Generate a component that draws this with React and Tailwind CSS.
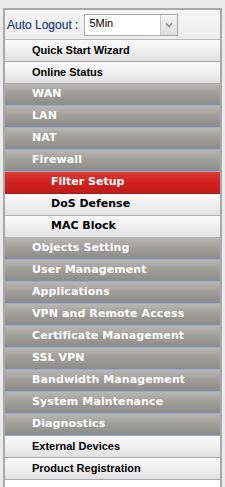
import React from "react";

const items = [
  { t: "Quick Start Wizard", k: "light" },
  { t: "Online Status", k: "light" },
  { t: "WAN", k: "gray" },
  { t: "LAN", k: "gray" },
  { t: "NAT", k: "gray" },
  { t: "Firewall", k: "gray" },
  { t: "Filter Setup", k: "red" },
  { t: "DoS Defense", k: "sub" },
  { t: "MAC Block", k: "sub" },
  { t: "Objects Setting", k: "gray" },
  { t: "User Management", k: "gray" },
  { t: "Applications", k: "gray" },
  { t: "VPN and Remote Access", k: "gray" },
  { t: "Certificate Management", k: "gray" },
  { t: "SSL VPN", k: "gray" },
  { t: "Bandwidth Management", k: "gray" },
  { t: "System Maintenance", k: "gray" },
  { t: "Diagnostics", k: "gray" },
  { t: "External Devices", k: "light" },
  { t: "Product Registration", k: "light" },
];

function Row({ t, k }) {
  if (k === "gray") {
    return (
      <div className="h-[22px] flex items-center pl-[27px] border-b border-[#8fabdf] bg-[linear-gradient(#b9b7b3,#a09e9a_45%,#8e8c88)] text-white font-bold text-[11px] font-['DejaVu_Sans',sans-serif] tracking-[0.1px]">
        {t}
      </div>
    );
  }
  if (k === "red") {
    return (
      <div className="h-[22px] flex items-center pl-[46px] border-b border-[#9c1a1a] bg-[linear-gradient(#de3a34,#d0231f_50%,#c01c18)] text-white font-bold text-[11px] font-['DejaVu_Sans',sans-serif]">
        {t}
      </div>
    );
  }
  if (k === "sub") {
    return (
      <div className="h-[22px] flex items-center pl-[46px] border-b border-[#b0b0b0] bg-[linear-gradient(#fbfbfb,#efefef_50%,#e1e1e1)] text-black font-bold text-[11px] font-['DejaVu_Sans',sans-serif]">
        {t}
      </div>
    );
  }
  return (
    <div className="h-[22px] flex items-center pl-[27px] border-b border-[#aaaaaa] bg-[linear-gradient(#fbfbfb,#efefef_50%,#e0e0e0)] text-black font-bold text-[11px] font-['Liberation_Sans',Arial,sans-serif]">
      {t}
    </div>
  );
}

export default function App() {
  return (
    <div className="w-[225px] h-[487px] bg-[#ebebeb] pt-[8px] px-[3px] overflow-hidden">
      <div className="h-full border-l-2 border-r-2 border-t-2 border-[#a8a8a8] bg-white flex flex-col">
        <div className="h-[30px] flex items-center bg-[linear-gradient(#f6f6f6,#ececec)] pl-[2px] border-b border-[#b8b8b8]">
          <span className="text-[12px] text-[#1f3d80] font-['Liberation_Sans',Arial,sans-serif] [-webkit-text-stroke:0.2px_#1f3d80]">Auto Logout :</span>
          <div className="ml-[6px] w-[94px] h-[22px] border border-[#a9a9a9] bg-white flex">
            <div className="flex-1 pl-[4px] pt-[1px] text-[11px] leading-[14px] text-black font-['Liberation_Sans',Arial,sans-serif]">5Min</div>
            <div className="w-[17px] h-full border-l border-[#c8c8c8] bg-[linear-gradient(#f4f4f4,#dcdcdc)] flex items-center justify-center">
              <svg width="8" height="6" viewBox="0 0 8 6">
                <path d="M1 1.5 L4 4.5 L7 1.5" fill="none" stroke="#8a8a8a" strokeWidth="1.6" />
              </svg>
            </div>
          </div>
        </div>
        {items.map((it) => (
          <Row key={it.t} {...it} />
        ))}
        <div className="flex-1 bg-white" />
      </div>
    </div>
  );
}
